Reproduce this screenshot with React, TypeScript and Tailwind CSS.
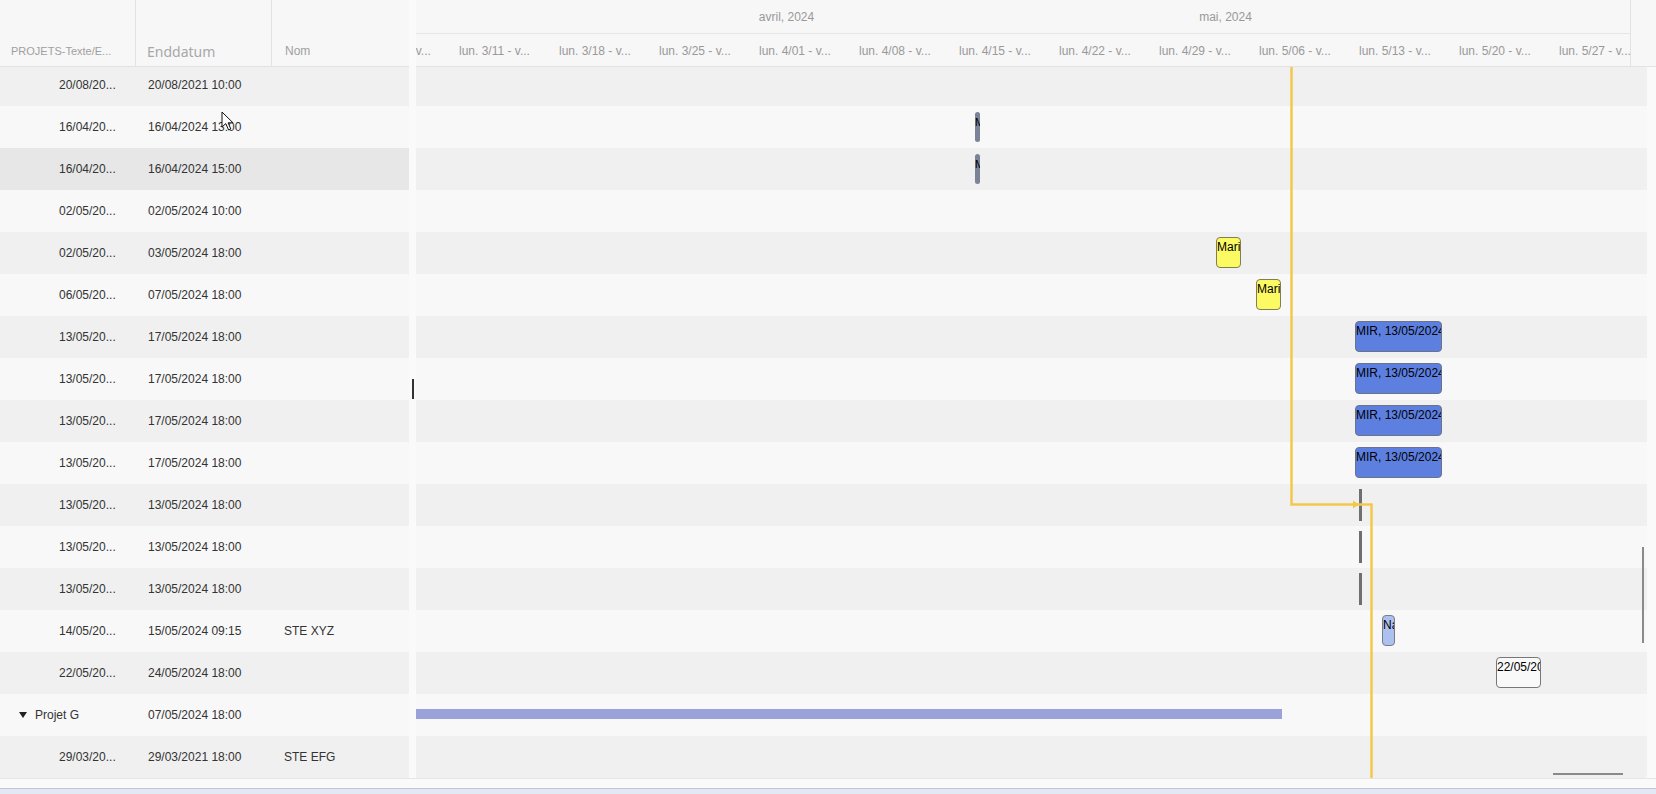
import React from "react";

type Bar =
  | { kind: "milestone"; left: number }
  | { kind: "tick"; left: number }
  | { kind: "box"; left: number; width: number; fill: string; border: string; label: string }
  | { kind: "summary"; left: number; width: number };

type Row = {
  start: string;
  end: string;
  name?: string;
  group?: boolean;
  hovered?: boolean;
  bar?: Bar;
};

const rows: Row[] = [
  { start: "20/08/20...", end: "20/08/2021 10:00" },
  { start: "16/04/20...", end: "16/04/2024 13:00", bar: { kind: "milestone", left: 559 } },
  { start: "16/04/20...", end: "16/04/2024 15:00", hovered: true, bar: { kind: "milestone", left: 559 } },
  { start: "02/05/20...", end: "02/05/2024 10:00" },
  {
    start: "02/05/20...",
    end: "03/05/2024 18:00",
    bar: { kind: "box", left: 800, width: 25, fill: "bg-[#fcfa63]", border: "border-[1.5px] border-[#7f7e56]", label: "Marie" },
  },
  {
    start: "06/05/20...",
    end: "07/05/2024 18:00",
    bar: { kind: "box", left: 840, width: 25, fill: "bg-[#fcfa63]", border: "border-[1.5px] border-[#7f7e56]", label: "Marie" },
  },
  ...Array.from({ length: 4 }, () => ({
    start: "13/05/20...",
    end: "17/05/2024 18:00",
    bar: {
      kind: "box" as const,
      left: 939,
      width: 87,
      fill: "bg-[#5d80e0]",
      border: "border-[1.5px] border-[#6c7388]",
      label: "MIR, 13/05/2024",
    },
  })),
  ...Array.from({ length: 3 }, () => ({
    start: "13/05/20...",
    end: "13/05/2024 18:00",
    bar: { kind: "tick" as const, left: 943 },
  })),
  {
    start: "14/05/20...",
    end: "15/05/2024 09:15",
    name: "STE XYZ",
    bar: { kind: "box", left: 966, width: 13, fill: "bg-[#adc1f1]", border: "border-[1.5px] border-[#7a7d86]", label: "Na" },
  },
  {
    start: "22/05/20...",
    end: "24/05/2024 18:00",
    bar: { kind: "box", left: 1080, width: 45, fill: "bg-[#f9f9f9]", border: "border-[1.5px] border-[#777777]", label: "22/05/2024" },
  },
  { start: "Projet G", end: "07/05/2024 18:00", group: true, bar: { kind: "summary", left: 0, width: 866 } },
  { start: "29/03/20...", end: "29/03/2021 18:00", name: "STE EFG" },
];

const weeks = [
  "lun. 3/04 - v...",
  "lun. 3/11 - v...",
  "lun. 3/18 - v...",
  "lun. 3/25 - v...",
  "lun. 4/01 - v...",
  "lun. 4/08 - v...",
  "lun. 4/15 - v...",
  "lun. 4/22 - v...",
  "lun. 4/29 - v...",
  "lun. 5/06 - v...",
  "lun. 5/13 - v...",
  "lun. 5/20 - v...",
  "lun. 5/27 - v...",
];

function rowBg(i: number) {
  return i % 2 === 0 ? "bg-[#f0f0f0]" : "bg-[#f8f8f8]";
}

function TaskBar({ bar }: { bar: Bar }) {
  if (bar.kind === "milestone") {
    return (
      <div
        className="absolute top-[6px] h-[30px] w-[5px] overflow-hidden rounded-[3px] bg-[#7b8399] text-[11px] leading-[20px] text-black"
        style={{ left: bar.left }}
      >
        M
      </div>
    );
  }
  if (bar.kind === "tick") {
    return <div className="absolute top-[5px] h-[32px] w-[3px] bg-[#6f6f6f]" style={{ left: bar.left }} />;
  }
  if (bar.kind === "summary") {
    return (
      <div
        className="absolute top-[15px] h-[10px] bg-[#9aa2d9]"
        style={{ left: bar.left, width: bar.width }}
      />
    );
  }
  return (
    <div
      className={`absolute top-[5px] h-[31px] overflow-hidden whitespace-nowrap rounded-[4px] ${bar.fill} ${bar.border} text-[12px] leading-[18px] text-black`}
      style={{ left: bar.left, width: bar.width }}
    >
      {bar.label}
    </div>
  );
}

function Caret() {
  return (
    <svg width="8" height="6" viewBox="0 0 8 6" className="shrink-0">
      <path d="M0 0 H8 L4 6 Z" fill="#222" />
    </svg>
  );
}

function Pointer() {
  return (
    <svg
      width="14"
      height="21"
      viewBox="0 0 14 21"
      className="pointer-events-none absolute left-[221px] top-[111px]"
    >
      <path
        d="M1 1 L1 16 L4.8 12.6 L7.6 19 L9.8 18 L7.1 11.8 L12 11.8 Z"
        fill="#ffffff"
        stroke="#111"
        strokeWidth="1"
        strokeLinejoin="round"
      />
    </svg>
  );
}

export default function App() {
  return (
    <div
      className="relative flex h-[794px] w-[1656px] flex-col overflow-hidden bg-[#fafafa] text-[#333]"
      style={{ fontFamily: '"Liberation Sans", Arial, sans-serif' }}
    >
      <div className="flex h-[778px]">
        {/* left grid */}
        <div className="flex w-[409px] shrink-0 flex-col">
          <div className="flex h-[67px] shrink-0 border-b border-[#e3e3e3] bg-[#f7f7f7]">
            <div className="flex w-[136px] items-end border-r border-[#e2e2e2] pb-[7px] pl-[11px] text-[11px] text-[#a0a0a0]">
              PROJETS-Texte/E...
            </div>
            <div
              className="flex w-[136px] items-end border-r border-[#e2e2e2] pb-[4px] pl-[11px] text-[14px] text-[#a8a8a8]"
              style={{ fontFamily: '"Noto Sans", "Open Sans", sans-serif' }}
            >
              Enddatum
            </div>
            <div className="flex flex-1 items-end pb-[6px] pl-[13px] text-[12px] text-[#a0a0a0]">Nom</div>
          </div>
          <div className="flex-1 overflow-hidden">
            <div className="-mt-[3px] flex flex-col">
              {rows.map((r, i) => (
                <div
                  key={i}
                  className={`flex h-[42px] shrink-0 items-center text-[12px] ${r.hovered ? "bg-[#e7e7e7]" : rowBg(i)}`}
                >
                  {r.group ? (
                    <div className="flex w-[136px] items-center gap-[8px] pl-[19px]">
                      <Caret />
                      <span>{r.start}</span>
                    </div>
                  ) : (
                    <div className="w-[136px] pl-[59px]">{r.start}</div>
                  )}
                  <div className="w-[136px] pl-[12px]">{r.end}</div>
                  <div className="flex-1 pl-[12px]">{r.name ?? ""}</div>
                </div>
              ))}
            </div>
          </div>
        </div>

        {/* splitter */}
        <div className="relative w-[7px] shrink-0">
          <div className="absolute left-[3px] top-[379px] h-[20px] w-[2px] bg-[#333]" />
        </div>

        {/* timeline */}
        <div className="flex min-w-0 flex-1 flex-col">
          <div className="flex h-[67px] shrink-0 bg-[#f7f7f7]">
            <div className="flex w-[1215px] flex-col overflow-hidden border-r border-[#e2e2e2] border-b border-b-[#e3e3e3]">
              <div className="flex h-[34px] shrink-0 items-center border-b border-[#e6e6e6] text-[12px] text-[#999]">
                <div className="w-[151px] shrink-0" />
                <div className="w-[439px] shrink-0 text-center">avril, 2024</div>
                <div className="w-[439px] shrink-0 text-center">mai, 2024</div>
              </div>
              <div className="flex flex-1 items-center overflow-hidden pt-[2px] text-[12px] text-[#999]">
                <div className="-ml-[57px] flex">
                  {weeks.map((w) => (
                    <div key={w} className="w-[100px] shrink-0 whitespace-nowrap">
                      {w}
                    </div>
                  ))}
                </div>
              </div>
            </div>
            <div className="flex-1 border-b border-[#e3e3e3]" />
          </div>

          <div className="relative flex-1 overflow-hidden">
            <div className="-mt-[3px] flex w-[1231px] flex-col overflow-hidden rounded-br-[4px]">
              {rows.map((r, i) => (
                <div key={i} className={`relative h-[42px] shrink-0 ${rowBg(i)}`}>
                  {r.bar && <TaskBar bar={r.bar} />}
                </div>
              ))}
            </div>

            {/* dependency connector */}
            <svg className="pointer-events-none absolute left-0 top-0" width="1240" height="711">
              <path d="M875.5 0 V437.5 H955.5 V711" fill="none" stroke="#f3c84a" strokeWidth="2.5" />
              <path d="M937 433.5 L943 437.5 L937 441.5 Z" fill="#f3c84a" />
            </svg>

            {/* scroll thumbs */}
            <div className="absolute left-[1226px] top-[480px] h-[96px] w-[2px] bg-[#8a8a8a]" />
            <div className="absolute left-[1137px] top-[706px] h-[2px] w-[70px] bg-[#8a8a8a]" />
          </div>
        </div>
      </div>

      <div className="flex h-[16px] flex-col border-t border-[#e6e6e6]">
        <div className="h-[9px]" />
        <div className="flex-1 border-t border-[#bcc6db] bg-[#e3e8f2]" />
      </div>

      <Pointer />
    </div>
  );
}
